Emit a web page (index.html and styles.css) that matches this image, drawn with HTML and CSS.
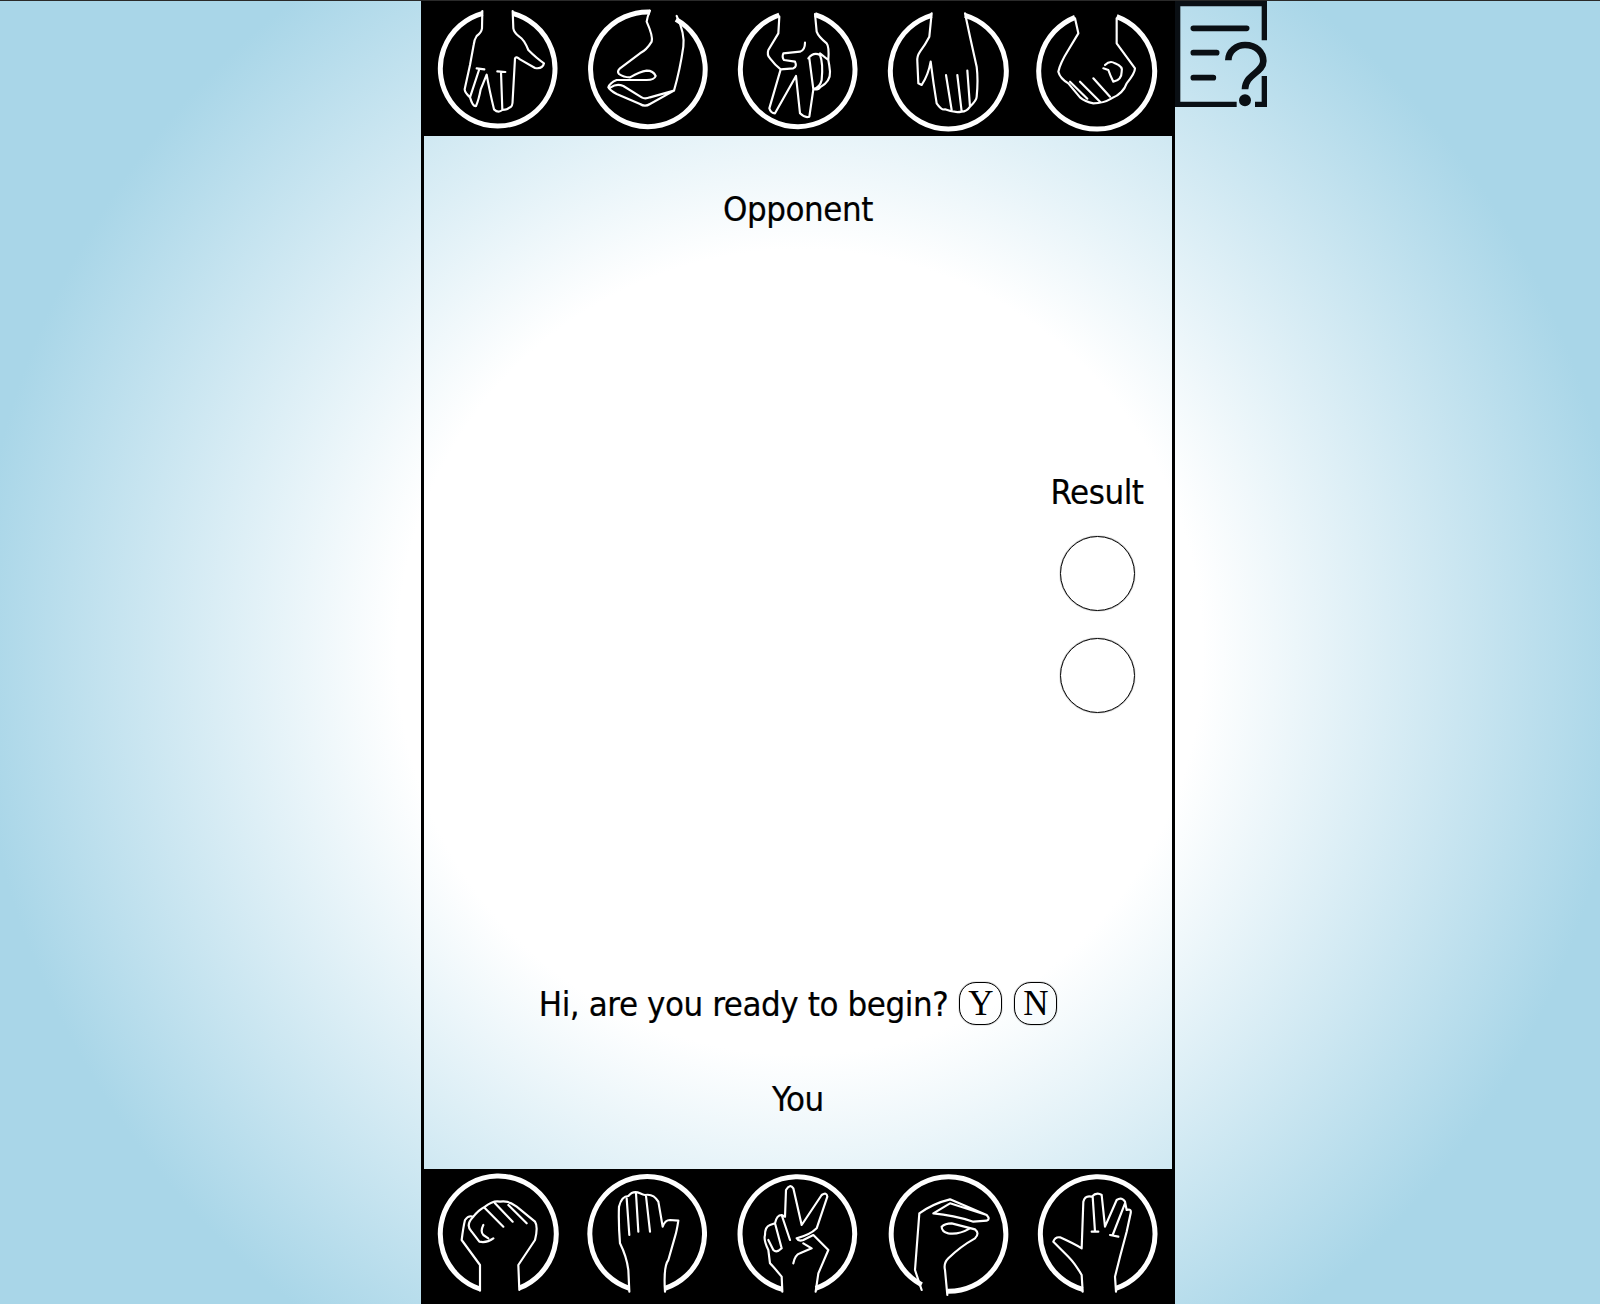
FILE: index.html
```html
<!DOCTYPE html>
<html lang="en">
<head>
<meta charset="utf-8">
<title>Rock Paper Scissors Lizard Spock</title>
<link rel="stylesheet" href="styles.css">
</head>
<body>
<div class="page">
  <main class="app">
    <header class="bar bar-top">
      <svg class="hand" viewBox="9 3 450 405"><path class="ring" d="M188 40A172 172 0 1 0 278 40"/><path class="line" d="M187 33L186 85Q184 98 170 108Q163 118 161 135L150 195L134 268Q134 278 150 292Q158 320 168 318Q176 300 182 268L200 224Q208 270 222 328Q235 340 247 330Q262 330 270 322Q278 320 278 300L285 175Q288 168 300 178L345 204Q368 208 372 190Q350 175 325 150Q312 118 298 110Q282 98 280 85L278 33M178 207L150 292M170 205L193 208M232 214L256 216M243 216L247 330"/></svg>
      <svg class="hand" viewBox="459 3 450 405"><path class="ring" d="M690 36A172 172 0 1 0 768 58"/><path class="line" d="M690 32Q682 50 680 65Q700 110 695 125Q680 150 660 160Q620 190 600 205Q590 215 597 222Q610 232 630 232Q660 215 680 212Q700 212 707 228Q703 240 680 240L590 240Q570 248 565 262Q570 272 590 282L660 312Q675 322 690 312L762 272Q780 210 790 140Q795 100 770 48M572 262Q590 250 610 258L665 292Q675 298 690 292L762 272"/></svg>
      <svg class="hand" viewBox="909 3 450 405"><path class="ring" d="M1078 45A172 172 0 1 0 1185 44"/><path class="line" d="M1078 50L1075 100Q1060 125 1045 150Q1040 165 1050 175Q1065 195 1082 208L1048 325Q1052 340 1065 340L1128 228L1140 340Q1155 355 1168 350L1180 268Q1195 270 1200 262Q1232 245 1230 215Q1228 195 1225 180Q1228 140 1220 130Q1195 110 1190 95L1185 42M1155 128Q1155 150 1140 155L1090 160Q1085 172 1092 180L1125 185Q1132 200 1120 205L1082 208M1165 175Q1180 155 1200 165Q1210 190 1205 240Q1200 262 1180 268L1168 175M1200 160L1225 180"/></svg>
      <svg class="hand" viewBox="39 3 450 405"><path class="ring" d="M215 46A174 174 0 1 0 315 46"/><path class="line" d="M215 40L208 110Q195 135 180 155Q170 170 172 185L175 250L185 255Q205 225 212 185Q220 250 230 310Q245 332 255 328Q285 340 305 335Q320 335 330 320Q350 300 350 290Q355 240 350 200L330 110L315 40M258 225L275 330M292 225L305 335M322 212L330 320"/></svg>
      <svg class="hand" viewBox="489 3 450 405"><path class="ring" d="M645 52A174 174 0 1 0 770 50"/><path class="line" d="M645 55L655 100L625 150Q600 190 595 215Q600 235 625 250L660 292Q675 305 700 310Q730 310 755 295Q790 280 800 250Q825 220 825 205L770 130L770 55M630 245L682 296M660 245L720 305M700 235L750 290M735 195Q750 180 765 190Q790 200 785 215Q785 240 760 245Q750 225 745 210L730 205"/></svg>
    </header>
    <section class="panel">
      <div class="label">Opponent</div>
      <div class="field">
        <div class="result">
          <div class="label">Result</div>
          <div class="score"></div>
          <div class="score"></div>
        </div>
      </div>
      <div class="prompt">
        <span class="label prompt-text">Hi, are you ready to begin?</span>
        <button class="answer" type="button">Y</button>
        <button class="answer" type="button">N</button>
      </div>
      <div class="label">You</div>
    </section>
    <footer class="bar bar-bottom">
      <svg class="hand" viewBox="9 27 450 405"><path class="ring" d="M180 387A174 174 0 1 1 298 384"/><path class="line" d="M180 392L180 315L125 240Q130 200 135 180Q145 165 160 170Q175 150 195 140Q220 120 240 125Q265 120 290 140L345 185Q355 200 345 240L295 315L298 390M195 145L250 200M225 130L278 185M265 135L320 190M160 170Q135 195 155 215L178 245Q200 250 220 235M190 195Q180 215 190 225L205 235"/></svg>
      <svg class="hand" viewBox="459 27 450 405"><path class="ring" d="M628 385A172 172 0 1 1 735 385"/><path class="line" d="M628 395L625 330Q620 290 600 250Q595 190 597 140Q605 108 625 108Q640 90 660 100Q670 105 675 105Q700 100 715 125L728 200Q735 180 750 180L775 182Q770 215 765 230L745 300Q730 320 735 395M620 115L628 225M648 100L655 215M678 108L690 215"/></svg>
      <svg class="hand" viewBox="909 27 450 405"><path class="ring" d="M1087 388A172 172 0 1 1 1187 385"/><path class="line" d="M1087 395L1085 350Q1060 320 1050 310L1045 270Q1030 240 1035 225Q1035 200 1050 195L1065 190Q1070 165 1085 165L1095 170L1098 90Q1110 70 1120 85L1145 195L1205 105Q1220 95 1222 110L1190 205Q1170 225 1130 235Q1135 245 1150 240L1180 225L1225 270L1195 340L1187 395M1065 190L1085 265Q1070 280 1060 270L1045 240M1085 165L1110 240M1120 310Q1125 285 1140 280L1175 265L1150 250"/></svg>
      <svg class="hand" viewBox="39 27 450 405"><path class="ring" d="M185 374A172 172 0 1 1 262 394"/><path class="line" d="M185 390L165 330L178 160Q220 130 270 118L380 165Q392 178 380 182L340 185Q280 165 220 160Q245 145 270 130L380 165M245 200Q255 190 275 190L345 208Q360 220 345 235Q300 260 265 295Q250 310 255 330L262 405M245 200Q245 215 265 220Q295 225 330 205"/></svg>
      <svg class="hand" viewBox="489 27 450 405"><path class="ring" d="M668 388A172 172 0 1 1 768 385"/><path class="line" d="M668 395L665 345Q645 310 625 290Q600 265 580 245Q585 230 600 232Q640 250 665 265L670 125Q675 105 695 110Q710 95 725 105L735 200L770 120Q785 110 795 125L800 150Q815 145 812 160L800 215L780 290L765 350L768 395M698 110L705 215M695 215L715 215M795 130L758 225M750 225L775 230"/></svg>
    </footer>
  </main>
  <svg class="help" viewBox="30 0 276 324">
    <path class="help-frame" d="M38 0V310H215M270 310H298V225M298 118V8H38"/>
    <path class="help-mark" d="M85 82H245M85 155H155M85 230H145"/>
    <path class="help-mark help-question" d="M190 178C190 150 215 132 240 132C275 132 295 155 295 180C295 215 240 220 240 265"/>
    <circle class="help-dot" cx="240" cy="298" r="18"/>
  </svg>
</div>
</body>
</html>
```
FILE: styles.css
```css
* {
  box-sizing: border-box;
}

html,
body {
  margin: 0;
  height: 100%;
}

body {
  background: radial-gradient(circle at 800px 652px, #fff 39%, #a9d6e8 80%);
  font-family: "DejaVu Sans", "Liberation Sans", sans-serif;
  font-stretch: condensed;
  color: #000;
}

.page {
  display: grid;
  grid-template-columns: 754px 92px;
  align-items: start;
  height: 1304px;
  padding-left: 421px;
  border-top: 1px solid #2a2a2a;
}

.app {
  display: flex;
  flex-direction: column;
  height: 1303px;
}

.bar {
  display: flex;
  flex: none;
  height: 135px;
  padding: 0 2px;
  background: #000;
}

.hand {
  display: block;
  flex: none;
  width: 150px;
  height: 135px;
  filter: blur(0.35px);
}

.ring,
.line {
  fill: none;
  stroke: #fff;
  stroke-linejoin: round;
  stroke-linecap: round;
}

.ring {
  stroke-width: 15;
  stroke-linecap: butt;
}

.line {
  stroke-width: 6.5;
}

.panel {
  display: flex;
  flex: 1;
  flex-direction: column;
  align-items: center;
  padding: 53px 0 50px;
  border-left: 3px solid #000;
  border-right: 3px solid #000;
}

.label {
  font-size: 34.5px;
  letter-spacing: -0.42px;
  line-height: 40px;
  -webkit-text-stroke: 0.2px #000;
}

.field {
  display: flex;
  flex: 1;
  justify-content: flex-end;
  align-self: stretch;
}

.result {
  display: flex;
  flex-direction: column;
  align-items: center;
  gap: 27px;
  width: 150px;
  padding-top: 243px;
}

.score {
  width: 75px;
  height: 75px;
  border: 1px solid #000;
  border-radius: 50%;
  box-shadow: 0 0 1px #000;
}

.result .label {
  margin-bottom: -3px;
}

.prompt {
  display: flex;
  align-items: center;
  height: 43px;
  margin-bottom: 54px;
}

.prompt-text {
  margin-top: 1px;
}

.answer {
  width: 43px;
  height: 43px;
  margin-left: 11px;
  padding: 0;
  border: 1px solid #000;
  border-radius: 17px;
  background: transparent;
  box-shadow: 0 0 1px #000;
  color: #000;
  font-family: "Liberation Serif", serif;
  font-size: 35px;
  line-height: 1;
}

.answer + .answer {
  margin-left: 12px;
}

.help {
  display: block;
  width: 92px;
  height: 108px;
}

.help-frame {
  fill: none;
  stroke: #0a0f14;
  stroke-width: 16;
}

.help-mark {
  fill: none;
  stroke: #0a0f14;
  stroke-width: 17;
  stroke-linecap: round;
}

.help-question {
  stroke-width: 20;
  stroke-linecap: butt;
}

.help-dot {
  fill: #0a0f14;
}
```
